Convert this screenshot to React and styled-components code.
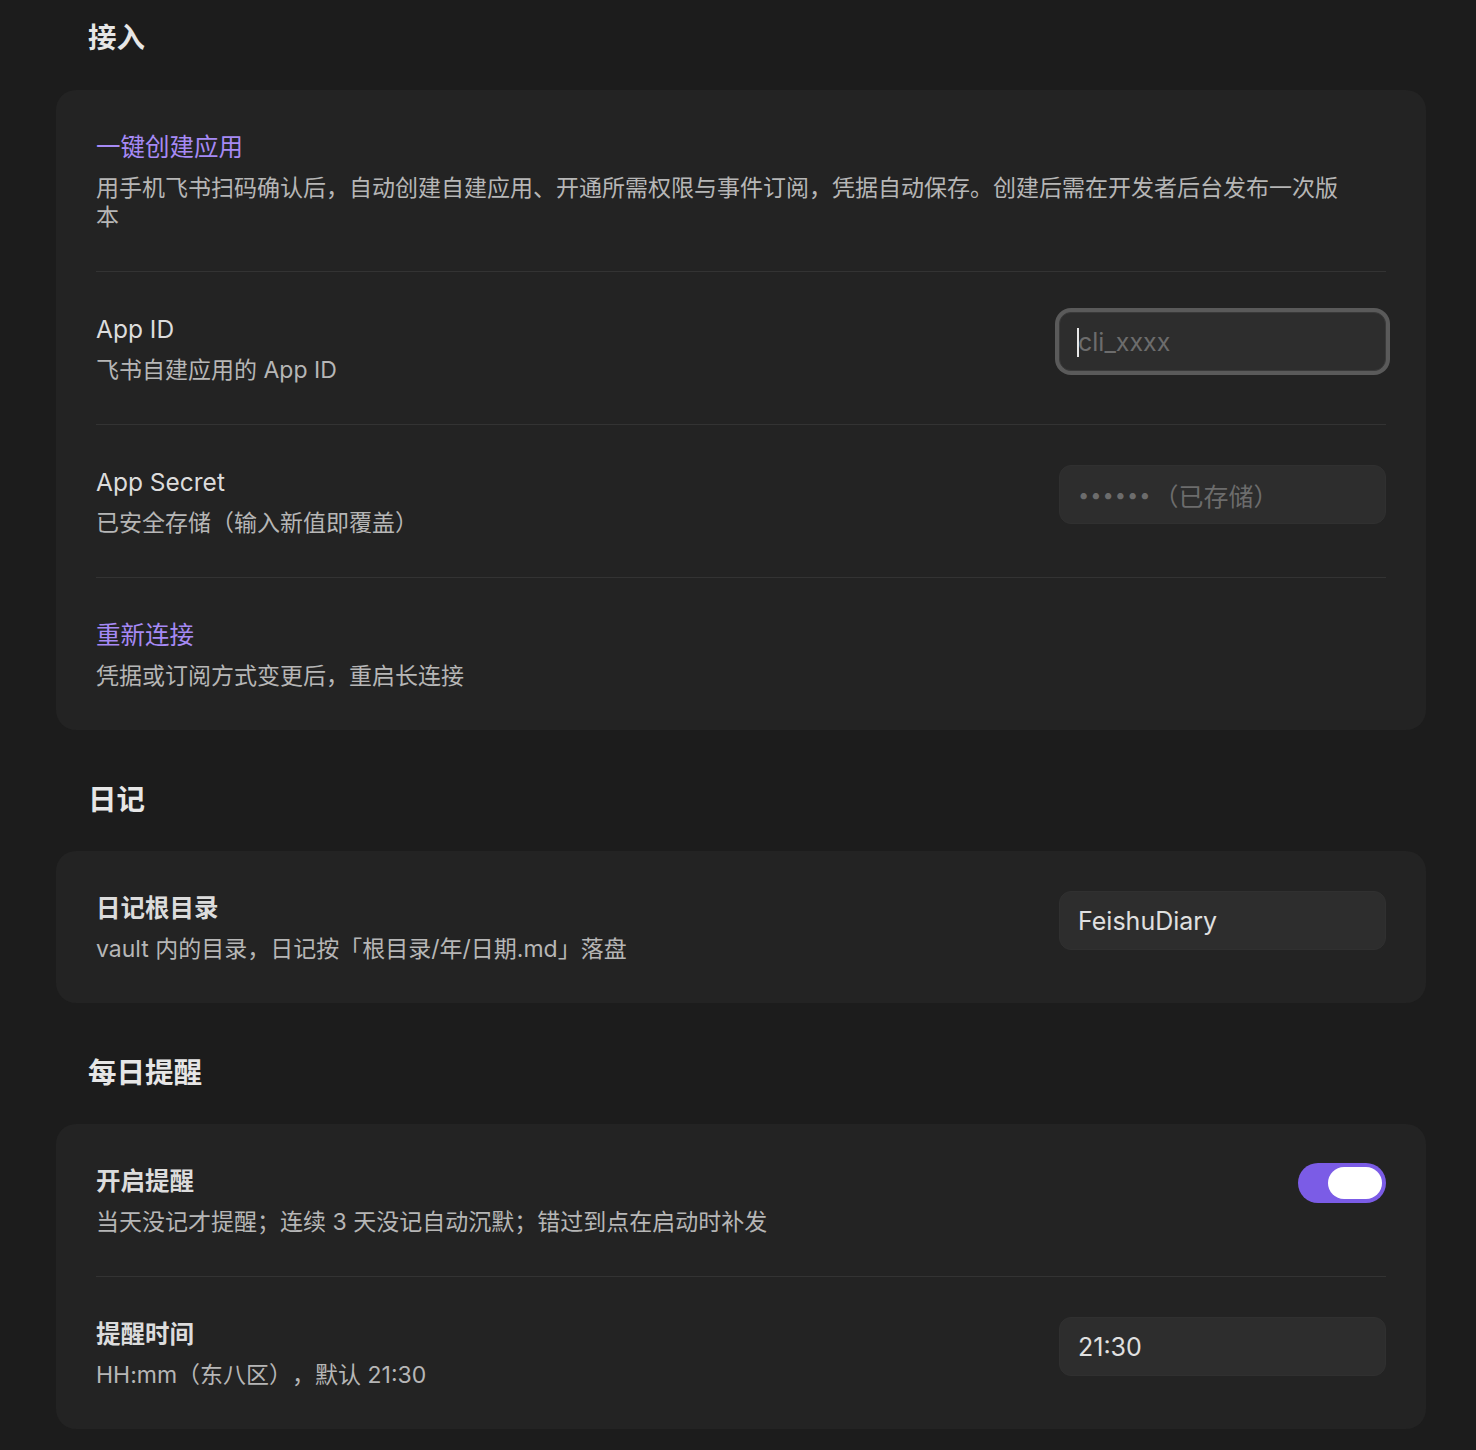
import React from "react";
import styled, { createGlobalStyle } from "styled-components";

const GlobalStyle = createGlobalStyle`
  html, body {
    margin: 0;
    background: #1c1c1c;
  }
  body {
    font-family: "Inter", "Noto Sans CJK SC", sans-serif;
    -webkit-font-smoothing: antialiased;
    text-spacing-trim: space-all;
  }
`;

const Page = styled.div`
    padding: 20px 50px 24px 56px;
    min-height: 1450px;
    box-sizing: border-box;
  `,
  Heading = styled.h2`
    margin: ${(p) => (p.first ? "0 0 34px" : "52px 0 33px")};
    padding-left: 32px;
    font-size: 28.5px;
    line-height: 36px;
    font-weight: 700;
    color: #e6e6e6;
  `,
  Card = styled.div`
    background: #232323;
    border-radius: 20px;
    padding: 0 40px;
  `,
  Item = styled.div`
    display: flex;
    align-items: flex-start;
    justify-content: space-between;
    padding: 41px 0 39px;
    & + & {
      border-top: 1px solid #333333;
    }
  `,
  Info = styled.div`
    flex: 1;
    min-width: 0;
    max-width: 1254px;
  `,
  Title = styled.div`
    font-size: 24.5px;
    line-height: 33px;
    font-weight: ${(p) => (p.bold ? 600 : 400)};
    color: ${(p) => (p.accent ? "#a68af5" : "#dcdcdc")};
  `,
  Desc = styled.div`
    margin-top: 10px;
    font-size: 23px;
    line-height: 29px;
    color: #b6b6b6;
  `,
  Field = styled.div`
    position: relative;
    flex: none;
    margin-top: -1px;
    width: 327px;
    height: 59px;
    box-sizing: border-box;
    display: flex;
    align-items: center;
    padding: 0 18px;
    background: #2d2d2d;
    border: 1px solid ${(p) => (p.focused ? "#3a3a3a" : "#303030")};
    border-radius: 12px;
    box-shadow: ${(p) => (p.focused ? "0 0 0 4px #5a5a5a" : "none")};
    font-size: 25px;
    color: ${(p) => (p.placeholder ? "#6c6c6c" : "#e0e0e0")};
    white-space: nowrap;
  `,
  Caret = styled.span`
    position: absolute;
    left: 17px;
    top: 15px;
    width: 2px;
    height: 29px;
    background: #e8e8e8;
  `,
  Dots = styled.span`
    letter-spacing: 1px;
    margin-right: 2px;
    font-size: 20px;
  `,
  Toggle = styled.div`
    flex: none;
    margin-top: -2px;
    width: 88px;
    height: 40px;
    box-sizing: border-box;
    padding: 4px;
    border-radius: 20px;
    background: #7b5ce6;
    display: flex;
    justify-content: flex-end;
  `,
  Knob = styled.div`
    width: 54px;
    height: 32px;
    border-radius: 16px;
    background: #ffffff;
  `;

const Setting = ({ title, desc, accent, bold, children }) => (
  <Item>
    <Info>
      <Title accent={accent} bold={bold}>
        {title}
      </Title>
      <Desc>{desc}</Desc>
    </Info>
    {children}
  </Item>
);

export default function App() {
  return (
    <Page>
      <GlobalStyle />
      <Heading first>接入</Heading>
      <Card>
        <Setting
          accent
          title="一键创建应用"
          desc="用手机飞书扫码确认后，自动创建自建应用、开通所需权限与事件订阅，凭据自动保存。创建后需在开发者后台发布一次版本"
        />
        <Setting title="App ID" desc="飞书自建应用的 App ID">
          <Field focused placeholder>
            <Caret />
            cli_xxxx
          </Field>
        </Setting>
        <Setting title="App Secret" desc="已安全存储（输入新值即覆盖）">
          <Field placeholder>
            <Dots>••••••</Dots>（已存储）
          </Field>
        </Setting>
        <Setting accent title="重新连接" desc="凭据或订阅方式变更后，重启长连接" />
      </Card>

      <Heading>日记</Heading>
      <Card>
        <Setting bold title="日记根目录" desc="vault 内的目录，日记按「根目录/年/日期.md」落盘">
          <Field>FeishuDiary</Field>
        </Setting>
      </Card>

      <Heading>每日提醒</Heading>
      <Card>
        <Setting
          bold
          title="开启提醒"
          desc="当天没记才提醒；连续 3 天没记自动沉默；错过到点在启动时补发"
        >
          <Toggle>
            <Knob />
          </Toggle>
        </Setting>
        <Setting bold title="提醒时间" desc="HH:mm（东八区），默认 21:30">
          <Field>21:30</Field>
        </Setting>
      </Card>
    </Page>
  );
}
